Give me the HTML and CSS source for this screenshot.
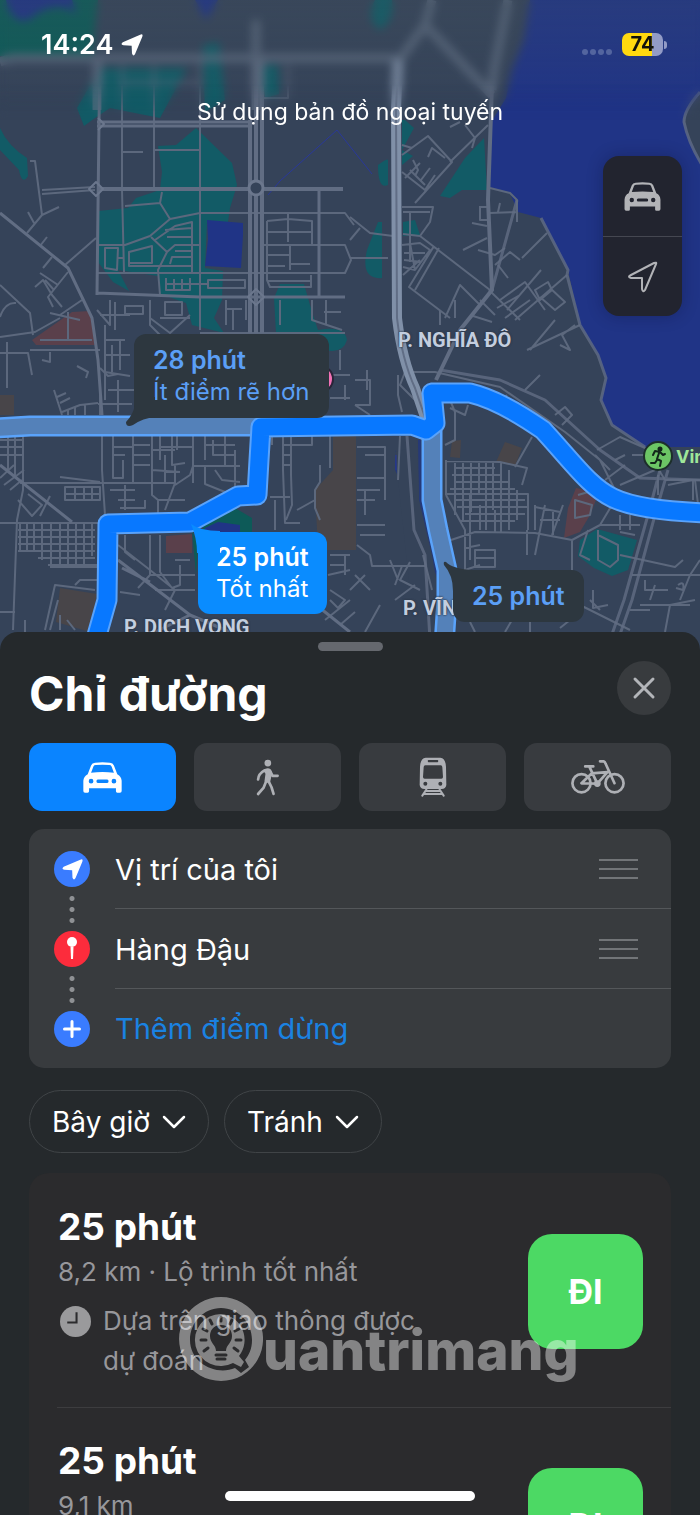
FILE: index.html
```html
<!DOCTYPE html>
<html lang="vi">
<head>
    <meta charset="UTF-8">
    <meta name="viewport" content="width=device-width, initial-scale=1">
    <title>Chỉ đường</title>
    <link rel="stylesheet" href="styles.css">
</head>
<body>
<!-- shared icons -->
<svg class="sprite" aria-hidden="true">
    <symbol id="car" viewBox="0 0 116 92">
        <path fill-rule="evenodd" d="M14 36L24 10Q27 3 36 2Q58 -1 80 2Q89 3 92 10L102 36Q114 42 115 56V86Q115 91 110 91H102Q98 91 98 87V78H18V87Q18 91 14 91H6Q1 91 1 86V56Q2 42 14 36ZM24 32Q58 28 92 32L85 13Q83 9 78 9Q58 7 38 9Q33 9 31 13ZM17 57a7 7 0 1 0 14 0a7 7 0 1 0 -14 0ZM85 57a7 7 0 1 0 14 0a7 7 0 1 0 -14 0ZM44 52H72Q76 52 76 57Q76 62 72 62H44Q40 62 40 57Q40 52 44 52Z"/>
    </symbol>
    <symbol id="arrow" viewBox="0 0 62 62">
        <path d="M60 8L40 56Q35 65 31 55L30 33L7 32Q-3 30 5 23L54 2Q63 -2 60 8Z"/>
    </symbol>
    <symbol id="grip" viewBox="0 0 39 20">
        <path d="M0 1H39M0 10H39M0 19H39" stroke="currentColor" stroke-width="2"/>
    </symbol>
    <symbol id="chevron" viewBox="0 0 24 14">
        <path d="M2 2L12 12L22 2" fill="none" stroke="currentColor" stroke-width="2.500" stroke-linecap="round" stroke-linejoin="round"/>
    </symbol>
</svg>

<div class="phone">
    <header class="map">
        <svg class="map-canvas" viewBox="0 0 700 660" preserveAspectRatio="xMidYMin slice" aria-hidden="true">
            <rect width="700" height="660" class="land"/>

            <!-- parks and buildings -->
            <g class="park">
                <path class="park-dark" d="M0 0H98L92 56H0Z"/>
                <path d="M375 0Q365 20 380 30Q395 20 392 0ZM100 68H187L160 118L110 108L95 118L84 126L77 108L92 82ZM203 45L219 42L225 100L205 112ZM262 65H278L279 94L265 98ZM0 128Q8 146 27 158L28 176Q22 186 19 170L0 150Z"/>
                <path d="M158 146L176 145L196 128L232 163L237 185L230 208L228 222H207L205 268L223 271L222 300L214 318L224 333L192 325L186 303L160 294L158 276L118 270L129 291L113 282L98 262V211L128 208L136 198L160 190L162 172Z"/>
                <path d="M274 298L280 284L304 284L312 312L318 330Q345 325 347 340Q343 354 325 350L318 333H276Z"/>
                <path d="M405 120L414 128L402 150L413 156L402 165V120ZM378 165Q388 158 388 160V185Q378 190 378 165ZM440 196L465 158L484 138L487 190L462 190L450 198ZM378 222L382 222L382 278Q360 280 367 250ZM403 222L415 220L420 235L403 236Z"/>
                <path d="M580 540L597 529L637 540L628 570L612 576L594 568L578 556Z"/>
                <path class="park-dark" d="M200 522L235 508L252 518V532H205ZM192 530L198 545L196 575Z"/>
            </g>
            <g class="water">
                <path d="M8 8Q20 30 36 14Q60 0 76 14L72 0H6ZM195 0L206 20L218 0ZM207 220L243 223V235L241 268L205 266L208 240ZM205 528L218 522L240 525V534H205Z"/>
                <path d="M530 0L524 40L512 70L506 98L490 124L490 188L510 193L518 212L541 218L568 270L580 325L598 355L606 378L601 400L612 425L645 447L700 447V0Z"/>
                <path d="M395 450V470L420 520L430 560L438 580V640H448V560L424 510L421 440L418 440L419 500L428 560Z" opacity=".7"/>
            </g>
            <path class="land" d="M395 452L410 448L417 440L419 500L432 555L438 590H410Z"/>
            <path class="land" d="M700 94Q684 110 684 122Q688 140 700 160Z"/>
            <path class="stream" d="M268 195L280 181L337 130L372 174M396 455V470"/>
            <g class="brown">
                <path d="M333 436H356V550H318L315 490L333 470ZM60 588L97 594L90 632L56 622ZM0 395H14V415H0ZM452 441L461 440L460 458L450 457ZM505 442L522 448L515 466L496 462Z"/>
                <path class="red" d="M32 340L72 312L90 311L95 345H36ZM166 536L192 534V553H166ZM576 488L592 491L596 500L590 515L580 532L564 538L568 508Z"/>
            </g>

            <!-- small streets -->
            <g class="street">
                <path d="M30 161H35L42 215L27 233M42 215L59 207M28 212L34 223M42 190L95 187M42 194L95 190M65 265L96 238M40 246L47 237M43 268L52 257M68 272L48 297L53 307M40 273L58 285M45 280L54 290M35 287L43 280L52 295L62 307M0 285L30 313L33 335M0 317Q5 302 16 303M50 313L80 320M68 312V340M60 315L82 300"/>
                <path d="M122 65V190L124 272M154 65V187M122 83H200M123 152H143M154 150H200M262 98H288V65M200 60V330M125 206L160 203L162 192M160 203L170 219M98 245H125L150 236L170 219L200 213H345L354 225M98 273H345L351 260L345 245H262"/>
                <path d="M105 248H118L117 270L105 268ZM118 258H124M129 252L152 246V263H129ZM129 257V266H192M151 237L167 252L158 270L160 295M155 240L175 226L192 222V272M165 230L192 228M167 237H192M167 252L175 245H200M170 264L172 257H192M175 251H192M166 278V290H190V278M166 284H208M208 280H245V288H208ZM174 279V290M182 279V290"/>
                <path d="M267 221L288 219L312 221V244M267 221V280L270 287H311V275M288 214V242M268 232H311M268 255H290M290 246V270M290 264H310M268 266H285M268 281H311M226 300V325M226 309H242M233 309V330M246 300V320M280 300V325M312 300V320L342 330M324 312H341M326 300V325"/>
                <path d="M97 310L110 325V300M100 315H130M115 302V330M125 306H143V314H125ZM150 300V325L160 335M165 302H182V315H165ZM160 318H190M105 325V400M105 340H125M112 345V372M120 340V370M105 355H130M105 372L130 376M108 390H134M118 380V412M98 404H132M100 395V415M150 318L170 333L190 315M200 333H345"/>
                <path d="M0 337L35 332L60 318M30 350H100M7 342V388M0 353H28L32 375M50 352V362L42 360M40 340H92M54 390L62 415M57 397L66 393M60 403L70 398M62 412L80 405L98 403M68 410V415M75 407V415M85 405V415M77 366L88 372L86 378M100 368L108 376L118 374"/>
                <path d="M0 440H22M0 447H22M0 455H22M8 436V470M15 436V478M0 478L14 465M4 485L24 470M10 490L22 480M18 500L32 516L42 505L28 494M23 436V490L17 520L13 630M20 483H175M60 477L100 482M65 487H100V500H65ZM65 494H100M75 487V500M84 487V500M92 487V500M40 516L50 496M0 523H110"/>
                <path d="M18 530H95M18 537H95M18 544H95M18 551H95M38 558H95M48 565H98M20 523V552M27 523V552M34 523V552M42 523V560M51 523V566M60 523V566M68 523V566M76 523V566M84 523V566M92 523V556M50 567H102"/>
                <path d="M102 436V470L105 515M113 436V478H123V460M113 447H133M113 455H125M133 436V483M133 455H150M133 445H150M133 465H150M152 436V495L158 500L185 500M152 450H175M160 436V460M160 447H192M172 436V465L185 463M177 436V450M193 436V483M152 470L180 472M165 455V482M175 465V483L165 510M193 466H240M205 436V460M205 445H235M213 440V455H235M225 436V466M235 450V495M193 466L190 475L175 485M205 466V484L225 492M215 470L222 480L240 482M118 500H135M120 508H145V500M110 490H135M125 485V510M158 500V520"/>
                <path d="M272 436V445M283 436V470L285 523H300M291 436V475L292 505L286 520M283 445H312V436M283 455H291M283 465H291M270 497H290M297 510L315 500M275 500V530M320 465V482L315 490V508L320 520M330 436V468M285 425V436M340 350V370M328 375H350M330 398H350M345 385V400"/>
                <path d="M45 630L55 585L95 590M50 630L58 600M75 585L80 580H100M0 612H15M25 620V632M60 615V630M67 620L75 630M118 545L150 570L175 590L165 610M125 535V552L135 560M150 535V575L138 588M160 535V572L172 588L180 585V565M150 575H195M175 560H190M120 592L140 595M155 590H195"/>
                <path d="M330 555H350M330 565H345M328 575L350 570M330 590L345 600L338 608L330 600M345 555V575M325 620L350 600M340 625L355 612"/>
            </g>
            <g class="street">
                <path d="M402 155L428 136L452 162L415 203M450 162L488 125M428 157L432 148L445 158M402 172L425 190L435 175M405 178L420 163M410 170L425 185M413 160L418 170L415 176M421 180L430 168M402 145L412 148M465 125L475 138L472 148M450 127L460 122M402 207H433L430 222L420 236L403 234M410 213V262M403 212H430M350 217L370 233L393 236M350 258H388M350 240L360 228"/>
                <path d="M420 236L490 290M439 248L415 290M434 246L409 287L450 318M402 245L420 243L430 250L415 270L403 267M404 253H425M404 260L422 262M410 243L415 270M403 275L420 260M463 250L487 238M478 250L495 255L505 248M495 265L510 252L520 260M498 265L508 278M522 258L547 233M480 207H487M480 206V220H487M472 223L487 226M500 203L498 212M490 188L510 193L517 200V222M490 213L517 212"/>
                <path d="M489 290L520 320M500 300L525 282L545 310M507 310L541 270M515 320L567 275M535 290L548 282L552 290L540 300ZM540 297L555 310L565 302L550 288M480 300L495 315M470 315L492 322M445 318L460 285L480 305M455 318V300M440 310V325M527 350L580 325M555 320L530 350M575 325L562 335L570 350L560 345M497 308L520 295M505 318L530 300"/>
                <path d="M412 372L435 372L500 387L565 432L600 460L615 490M525 390L540 375M555 415L565 407L572 415L562 425M597 450L620 437L645 448M595 455L610 470M615 460L625 455M605 480L625 465M620 485L655 470M645 447L665 480L700 480M632 455H645M668 485L693 480V500M658 475V495M415 400L400 385L405 372M398 375V395L402 412M355 380H370V405H355M367 370V390M355 405L370 415M450 400L455 412V440L445 445M450 408L465 415L468 405M507 395L500 402"/>
                <path d="M446 460V495M446 461L500 462L527 468L522 485M455 468H495M452 475H500M455 482H510M450 489H515M446 494H528V530M455 500H525M457 507H528M465 514H525M460 521H515M455 463V515M463 463V520M471 463V512M479 463V495M486 463V530M493 463V510M501 463V532M509 470V530M517 490V520M470 495V530M480 505V530M495 510V532M532 437L515 467"/>
                <path d="M446 495L465 530V570L480 565M445 542L475 532L535 533L572 540L600 525L615 500M527 530V555M535 505V530M545 505L535 555M553 510V535M563 505L552 535M535 507L560 512M540 520H560M475 550H495V567H475ZM475 558H495M470 530V560M465 548L480 545M575 500L592 505L590 515L575 518ZM578 495L595 490M572 540V570L560 580M588 530L580 555L590 560M598 530V560L610 567L618 560V545L598 535M600 525H640M620 515V530M630 515V530M620 532L635 535"/>
                <path d="M357 447H385V478H357M365 455H385M357 490H380M357 500H375M365 490V515M357 525H385M360 535H385M357 545L370 555L372 566H425M390 560L398 580M402 566L395 585M410 562L400 580L420 590M350 590L365 575M395 600L415 585M365 632L380 605M400 436L398 480M385 460V500M423 555L432 590M355 575L370 590"/>
                <path d="M620 555L675 567L683 560M632 575H700M645 580V590H665M655 585L650 600M630 610H650M640 605H690M665 632L670 605L695 600M678 585Q685 580 683 590L676 588M590 600L600 610M593 590V608L608 605M580 605L630 630M645 590H668M700 560L690 575L680 600M695 480L700 520"/>
                <path d="M505 632L512 620M530 632V620M560 628L570 620M475 632L470 622"/>
            </g>

            <!-- wider roads -->
            <g class="road">
                <path d="M97 122H250M97 126H250M100 60L99 122L97 295M0 213L68 268L92 318L98 360L102 415M0 465L72 522M97 293L200 297H345M319 190V298M105 515L108 560M118 560L190 615L230 632M155 632L190 615M310 600L350 632M122 568L150 582"/>
                <path d="M492 290L517 200M541 218L568 270L567 275L580 325L598 355L606 378L601 400L612 425L645 447M440 370L500 380L545 400L600 450L640 478L700 480M668 470L655 515L632 600L618 640M660 470L648 515L624 600L610 640M407 436L414 530L425 555L430 640M700 92Q684 110 684 122Q688 142 702 165" opacity=".8"/>
            </g>
            <path class="road wide" d="M97 189H343M256 60V333M262 60V333M250 120V333"/>
            <path class="road blurry" d="M0 62L12 58H400M432 0L425 25L398 62M508 0L494 70L492 90M425 25L492 95M97 60V110M256 20V110"/>
            <path class="road wide" d="M492 85L488 200L492 290L460 330L436 380"/>
            <g class="highway">
                <path class="hw-case" d="M398 60L396 110L397 318Q402 360 415 388L430 432"/>
                <path class="hw-mid" d="M398 60L396 110L397 318Q402 360 415 388L430 432"/>
            </g>
            <g class="junction">
                <circle cx="256" cy="188" r="7"/>
                <path d="M96 182L103 189L96 196L89 189ZM256 289L264 297L256 305L248 297ZM98 118L104 124L98 130"/>
            </g>

            <!-- routes -->
            <g class="route">
                <path class="alt-edge" d="M-5 428L30 426H262M432 430V500L438 530L447 570V600L443 660"/>
                <path class="alt-fill" d="M-5 428L30 426H262M432 430V500L438 530L447 570V600L443 660"/>
                <path class="best-edge" d="M90 660L107 600L108 524L190 522L238 496L257 495L259 460L261 427L412 425L426 430L435 423L432 393L470 393Q500 400 543 430C575 465 590 487 613 498Q640 511 710 513"/>
                <path class="best-fill" d="M90 660L107 600L108 524L190 522L238 496L257 495L259 460L261 427L412 425L426 430L435 423L432 393L470 393Q500 400 543 430C575 465 590 487 613 498Q640 511 710 513"/>
            </g>
            <circle cx="320" cy="379" r="13" fill="#f272b6" stroke="#2a2338" stroke-width="2"/>
            <circle cx="658" cy="456" r="14" fill="#6cc565" stroke="#1d2f2b" stroke-width="2"/>
            <g fill="none" stroke="#12261a" stroke-width="2" stroke-linecap="round" stroke-linejoin="round">
                <circle cx="660" cy="449" r="1.500" fill="#12261a"/>
                <path d="M653 455L655 451L660 452L663 455L665 454M659 453L657 459L661 461L660 466M657 460L655 463H651"/>
            </g>
        </svg>
        <div class="map-haze"></div>

        <span class="district nghia-do">P. NGHĨA ĐÔ</span>
        <span class="district dich-vong">P. DỊCH VỌNG</span>
        <span class="district vinh">P. VĨN</span>
        <span class="poi">Vin</span>

        <button class="callout callout-first">
            <svg class="tail" viewBox="0 0 30 30" aria-hidden="true"><path d="M10 0V8Q8 18 1 25Q1 31 8 28Q18 21 30 20V0Z"/></svg>
            <strong>28 phút</strong>
            <span>Ít điểm rẽ hơn</span>
        </button>
        <button class="callout callout-best">
            <svg class="tail" viewBox="0 0 30 30" aria-hidden="true"><path d="M1 1Q10 8 30 8V30H7Q7 15 1 1Z"/></svg>
            <strong>25 phút</strong>
            <span>Tốt nhất</span>
        </button>
        <button class="callout callout-third">
            <svg class="tail" viewBox="0 0 30 30" aria-hidden="true"><path d="M3 1Q10 8 30 9V30H10Q10 14 1 4Q0 0 3 1Z"/></svg>
            <strong>25 phút</strong>
        </button>

        <div class="status-bar">
            <div class="clock">
                <span>14:24</span>
                <svg class="status-arrow" aria-hidden="true"><use href="#arrow"/></svg>
            </div>
            <div class="status-right">
                <span class="signal"><i></i><i></i><i></i><i></i></span>
                <span class="battery">74</span>
            </div>
        </div>
        <p class="offline">Sử dụng bản đồ ngoại tuyến</p>

        <div class="map-tools">
            <button aria-label="Kiểu bản đồ"><svg class="tool-car"><use href="#car"/></svg></button>
            <button aria-label="Vị trí">
                <svg class="tool-arrow" viewBox="0 0 32 32"><path d="M29 3L18 29Q16 32 15 28V17H4Q0 16 4 14L27 2Q30 1 29 3Z"/></svg>
            </button>
        </div>
    </header>

    <main class="sheet">
        <div class="handle"></div>
        <div class="sheet-head">
            <h1>Chỉ đường</h1>
            <button class="close" aria-label="Đóng">
                <svg viewBox="0 0 24 24"><path d="M3 3L21 21M21 3L3 21"/></svg>
            </button>
        </div>

        <nav class="modes">
            <button class="mode active" aria-label="Lái xe"><svg class="m-car"><use href="#car"/></svg></button>
            <button class="mode" aria-label="Đi bộ">
                <svg class="m-walk" viewBox="0 0 68 110">
                    <circle cx="35" cy="12" r="10"/>
                    <path d="M21 34Q33 22 44 31Q48 36 46 50L42 68Q32 74 25 66L28 44Z"/>
                    <path class="line" d="M25 34Q7 44 6 61M43 38L49 50H64M31 64L22 86L6 104M37 66L46 84L52 104"/>
                </svg>
            </button>
            <button class="mode" aria-label="Phương tiện công cộng">
                <svg class="m-train" viewBox="0 0 84 120">
                    <path fill-rule="evenodd" d="M20 2H64Q80 4 81 30L82 84Q80 96 68 96H16Q4 96 2 84L3 30Q4 4 20 2ZM28 9Q24 12 28 16H56Q60 12 56 9ZM19 25Q14 25 14 31L12 60Q12 65 17 65H67Q72 65 72 60L70 31Q70 25 65 25ZM13 80a6 6 0 1 0 12 0a6 6 0 1 0 -12 0ZM58 80a6 6 0 1 0 12 0a6 6 0 1 0 -12 0Z"/>
                    <path class="line" d="M22 98L10 116M62 98L74 116M20 102H64M14 111H70"/>
                </svg>
            </button>
            <button class="mode" aria-label="Đạp xe">
                <svg class="m-bike" viewBox="0 0 160 104">
                    <g class="line">
                        <circle cx="31" cy="69" r="27"/>
                        <circle cx="129" cy="69" r="27"/>
                        <path d="M42 19H66M55 21L78 70M31 69L61 40L108 36L78 70L31 69M86 4H97Q101 5 103 12L129 69"/>
                        <circle cx="78" cy="70" r="6"/>
                    </g>
                </svg>
            </button>
        </nav>

        <ul class="stops">
            <li>
                <span class="dot blue"><svg class="dot-arrow"><use href="#arrow"/></svg></span>
                <span class="stop-name">Vị trí của tôi</span>
                <button class="grip" aria-label="Sắp xếp"><svg><use href="#grip"/></svg></button>
            </li>
            <li>
                <span class="dot red-dot"><svg class="dot-pin" viewBox="0 0 12 24"><circle cx="6" cy="5" r="5"/><path d="M4.500 10H7.500L7 22H5Z"/></svg></span>
                <span class="stop-name">Hàng Đậu</span>
                <button class="grip" aria-label="Sắp xếp"><svg><use href="#grip"/></svg></button>
            </li>
            <li>
                <span class="dot blue"><svg class="dot-plus" viewBox="0 0 18 18"><path d="M9 1.500V16.500M1.500 9H16.500"/></svg></span>
                <button class="stop-name add">Thêm điểm dừng</button>
            </li>
        </ul>

        <div class="filters">
            <button>Bây giờ <svg><use href="#chevron"/></svg></button>
            <button>Tránh <svg><use href="#chevron"/></svg></button>
        </div>

        <section class="results">
            <article class="result">
                <div class="info">
                    <h2>25 phút</h2>
                    <p>8,2 km · Lộ trình tốt nhất</p>
                    <div class="note">
                        <svg viewBox="0 0 30 30"><circle cx="15" cy="15" r="15"/><path d="M16 6V16H7"/></svg>
                        <p>Dựa trên giao thông được dự đoán</p>
                    </div>
                </div>
                <button class="go">ĐI</button>
            </article>
            <article class="result">
                <div class="info">
                    <h2>25 phút</h2>
                    <p>9,1 km</p>
                </div>
                <button class="go">ĐI</button>
            </article>
            <div class="watermark">
                <svg viewBox="0 0 84 86" aria-hidden="true">
                    <path fill-rule="evenodd" d="M42 0a42 42 0 1 0 .1 0ZM42 11C59 11 73 25 73 43C73 52 70 58 66 63L70 70L62 76L56 71C38 79 11 67 11 43C11 25 25 11 42 11Z"/>
                    <path fill-rule="evenodd" d="M42 17a26 26 0 1 0 12 49L62 70L65 65L60 59A26 26 0 0 0 42 17ZM42 28C50 28 53 34 53 39C53 46 47 48 47 54H37C37 48 31 46 31 39C31 34 34 28 42 28Z"/>
                    <path class="rays" d="M42 20V24M31 23L33 27M53 23L51 27M24 32L28 34M60 32L56 34M22 43H27M62 43H57M25 54L29 51M59 54L55 51M37 58H47M38 62H46"/>
                </svg>
                <span>uantrimang</span>
            </div>
        </section>
    </main>
    <div class="home-bar"></div>
</div>
</body>
</html>
```
FILE: styles.css
```css
*{
    box-sizing: border-box;
}
body,h1,h2,p,ul{
    margin:0;
    padding:0;
}
ul{
    list-style: none;
}
body{
    background-color:#25292c;
    color:#fff;
    font-family: Inter, "Noto Sans", sans-serif;
}
button{
    margin:0;
    padding:0;
    border:0;
    background: none;
    color:inherit;
    font:inherit;
    cursor: pointer;
}
svg{
    display: block;
}
.sprite{
    position: absolute;
    width:0;
    height:0;
}
.phone{
    position: relative;
    display: flex;
    flex-direction: column;
    height:100vh;
    overflow: hidden;
}

/* map */
.map{
    position: relative;
    flex:none;
    height:660px;
    overflow: hidden;
}
.map-canvas{
    position: absolute;
    top:0;
    left:0;
    width:100%;
    height:100%;
}
.land{
    fill:#354359;
}
.park{
    fill:#125b66;
}
.park-dark{
    fill:#0d5a58;
}
.water{
    fill:#203486;
}
.stream{
    fill:none;
    stroke:#29389a;
}
.brown{
    fill:#484549;
}
.red{
    fill:#5a404b;
}
.street,.road,.junction,.highway,.route{
    fill:none;
    stroke-linejoin: round;
}
.street{
    stroke:#5c687d;
    stroke-width:2;
}
.road{
    stroke:#616d83;
    stroke-width:3;
}
.wide{
    stroke-width:4;
}
.blurry{
    stroke-width:9;
    opacity:.7;
}
.hw-case{
    stroke:#8090a8;
    stroke-width:10;
}
.hw-mid{
    stroke:#606d85;
    stroke-width:2;
}
.junction{
    stroke:#6b778d;
    stroke-width:2;
}
.junction circle{
    fill:#354359;
    stroke-width:3;
}
.alt-edge,.best-edge{
    stroke:#5aa3fb;
    stroke-width:21;
}
.alt-fill{
    stroke:#5481b9;
    stroke-width:16;
}
.best-fill{
    stroke:#0878ff;
    stroke-width:17;
}
.map-haze{
    position: absolute;
    top:0;
    left:0;
    right:0;
    height:120px;
    background: linear-gradient(rgba(74,90,98,.2), rgba(54,67,88,0));
    backdrop-filter: blur(4px);
    -webkit-mask-image: linear-gradient(#000 70%, transparent);
    mask-image: linear-gradient(#000 70%, transparent);
}
.district{
    position: absolute;
    color:#c3cedf;
    font:bold 20px/24px "Liberation Sans Narrow", Roboto, sans-serif;
    white-space: nowrap;
    text-shadow: 0 0 2px #2c3748, 0 0 2px #2c3748;
}
.nghia-do{
    left:398px;
    top:328px;
}
.dich-vong{
    left:124px;
    top:615px;
}
.vinh{
    left:403px;
    top:596px;
}
.poi{
    position: absolute;
    left:676px;
    top:445px;
    color:#9fe79a;
    font-size:18px;
    font-weight:700;
    line-height:24px;
}
.callout{
    position: absolute;
    display: flex;
    flex-direction: column;
    padding:10px 19px;
    border-radius:12px;
    background-color:#2d373f;
    color:#5b9ff6;
    font-size:24px;
    line-height:32px;
    text-align: left;
    white-space: nowrap;
}
.callout strong{
    font-size:25px;
    font-weight:600;
}
.tail{
    position: absolute;
    width:30px;
    height:30px;
    fill:#2d373f;
}
.callout-first{
    left:134px;
    top:334px;
}
.callout-first .tail{
    left:-9px;
    bottom:-9px;
}
.callout-best{
    left:198px;
    top:532px;
    padding:9px 18px;
    background-color:#0a8cff;
    color:#fff;
}
.callout-best .tail{
    left:-8px;
    top:-9px;
    fill:#0a8cff;
}
.callout-third{
    left:453px;
    top:570px;
}
.callout-third .tail{
    left:-10px;
    top:-9px;
}
.status-bar{
    position: relative;
    display: flex;
    justify-content: space-between;
    align-items: center;
    padding:28px 37px 0 41px;
}
.clock{
    display: flex;
    align-items: center;
    gap:8px;
    font-size:27px;
    font-weight:600;
    line-height:33px;
}
.status-arrow{
    width:22px;
    height:22px;
    fill:#fff;
}
.status-right{
    display: flex;
    align-items: center;
    gap:10px;
}
.signal{
    display: flex;
    gap:2px;
    padding-top:14px;
}
.signal i{
    width:6px;
    height:6px;
    border-radius:50%;
    background-color:#53659f;
}
.battery{
    position: relative;
    width:41px;
    border-radius:7px;
    background: linear-gradient(90deg, #ffd90f 74%, #929bc6 74%);
    color:#11120c;
    font-size:20px;
    font-weight:700;
    line-height:23px;
    text-align: center;
}
.battery::after{
    content:"";
    position: absolute;
    right:-4px;
    top:8px;
    width:3px;
    height:8px;
    border-radius:0 4px 4px 0;
    background-color:#929bc6;
}
.offline{
    position: relative;
    padding-top:34px;
    font-size:23px;
    line-height:34px;
    text-align: center;
}
.map-tools{
    position: absolute;
    top:156px;
    right:18px;
    display: flex;
    flex-direction: column;
    width:79px;
    border-radius:16px;
    background-color:#22242f;
    box-shadow: 0 0 16px rgba(10,14,40,.3);
}
.map-tools button{
    display: grid;
    place-items: center;
    height:80px;
}
.map-tools button + button{
    border-top:1px solid #454751;
}
.tool-car{
    width:37px;
    height:29px;
    fill:#b2b3b7;
}
.tool-arrow{
    width:32px;
    height:32px;
    fill:none;
    stroke:#b2b3b7;
    stroke-width:2;
    stroke-linejoin: round;
}

/* sheet */
.sheet{
    position: relative;
    flex:1;
    min-height:0;
    margin-top:-28px;
    padding:10px 29px 0;
    border-radius:18px 18px 0 0;
    background-color:#25292c;
    overflow: hidden;
}
.handle{
    width:65px;
    height:9px;
    margin:0 auto;
    border-radius:5px;
    background-color:#65686e;
}
.sheet-head{
    display: flex;
    justify-content: space-between;
    align-items: flex-start;
    padding-top:10px;
}
h1{
    font-size:48px;
    font-weight:700;
    line-height:66px;
}
.close{
    display: grid;
    place-items: center;
    width:54px;
    height:54px;
    border-radius:50%;
    background-color:#383b3e;
}
.close svg{
    width:24px;
    height:24px;
    fill:none;
    stroke:#b3b5b9;
    stroke-width:3;
    stroke-linecap: round;
}
.modes{
    display: grid;
    grid-template-columns: repeat(4, 1fr);
    gap:18px;
    margin-top:16px;
}
.mode{
    display: grid;
    place-items: center;
    height:68px;
    border-radius:13px;
    background-color:#383b3f;
    color:#aeb0b5;
    fill:#aeb0b5;
}
.mode.active{
    background-color:#0a84ff;
    color:#fff;
    fill:#fff;
}
.mode .line{
    fill:none;
    stroke:currentColor;
    stroke-width:8;
    stroke-linecap: round;
    stroke-linejoin: round;
}
.mode .m-train .line{
    stroke-width:6;
}
.m-car{
    width:39px;
    height:31px;
}
.m-walk{
    width:23px;
    height:37px;
}
.m-train{
    width:28px;
    height:40px;
}
.m-bike{
    width:54px;
    height:35px;
}
.stops{
    margin-top:18px;
    border-radius:15px;
    background-color:#383b3e;
}
.stops li{
    position: relative;
    display: flex;
    align-items: center;
    height:80px;
    padding-left:25px;
}
.stops li:last-child{
    height:79px;
}
/* line and the three dots between two stops */
.stops li + li::before{
    content:"";
    position: absolute;
    top:-1px;
    left:86px;
    right:0;
    height:1px;
    background-color:#54575a;
}
.stops li + li::after{
    content:"";
    position: absolute;
    top:-16px;
    left:40px;
    width:6px;
    height:33px;
    background: radial-gradient(circle, #8f9194 2px, transparent 3px) 0 0 / 6px 11px;
}
.dot{
    display: grid;
    place-items: center;
    width:36px;
    height:36px;
    border-radius:50%;
    fill:#fff;
}
.blue{
    background-color:#3a7cff;
}
.red-dot{
    background-color:#fc2c3c;
}
.dot-arrow{
    width:21px;
    height:21px;
}
.dot-pin{
    width:12px;
    height:24px;
}
.dot-plus{
    width:18px;
    height:18px;
    stroke:#fff;
    stroke-width:3;
    stroke-linecap: round;
}
.stop-name{
    flex:1;
    margin-left:25px;
    font-size:29px;
    text-align: left;
}
.add{
    color:#1a82e2;
}
.grip{
    margin-right:33px;
    color:#727578;
}
.grip svg{
    width:39px;
    height:20px;
}
.filters{
    display: flex;
    gap:15px;
    margin-top:22px;
}
.filters button{
    display: flex;
    align-items: center;
    gap:12px;
    height:63px;
    padding:0 22px;
    border:1px solid #404447;
    border-radius:32px;
    font-size:28px;
}
.filters svg{
    width:24px;
    height:14px;
}
.results{
    position: relative;
    margin-top:20px;
    padding-top:1px;
    border-radius:20px;
    background-color:#2b2b2d;
}
.result{
    display: flex;
    justify-content: space-between;
    margin-left:28px;
    padding:28px 28px 26px 1px;
}
.result + .result{
    border-top:1px solid #3d3d3f;
}
h2{
    font-size:37px;
    font-weight:700;
    line-height:50px;
}
.info p{
    color:#97979b;
    font-size:26px;
    line-height:40px;
}
.note{
    display: flex;
    gap:12px;
    max-width:370px;
    margin-top:9px;
}
.note svg{
    flex:none;
    width:31px;
    height:31px;
    margin:5px 0 0 2px;
    fill:#9a9a9c;
}
.note path{
    fill:none;
    stroke:#2b2b2d;
    stroke-width:2;
}
.go{
    width:115px;
    height:115px;
    margin-top:32px;
    border-radius:24px;
    background-color:#4cd964;
    font-size:34px;
    font-weight:700;
}
.watermark{
    position: absolute;
    top:124px;
    left:150px;
    display: flex;
    opacity:.42;
    pointer-events: none;
}
.watermark svg{
    width:84px;
    height:86px;
    fill:#fff;
}
.rays{
    fill:none;
    stroke:#2b2b2d;
    stroke-width:3;
    stroke-linecap: round;
}
.watermark span{
    font-size:55px;
    font-weight:800;
    line-height:106px;
}
.home-bar{
    position: absolute;
    bottom:14px;
    left:50%;
    width:250px;
    height:10px;
    margin-left:-125px;
    border-radius:5px;
    background-color:#fff;
}
```
